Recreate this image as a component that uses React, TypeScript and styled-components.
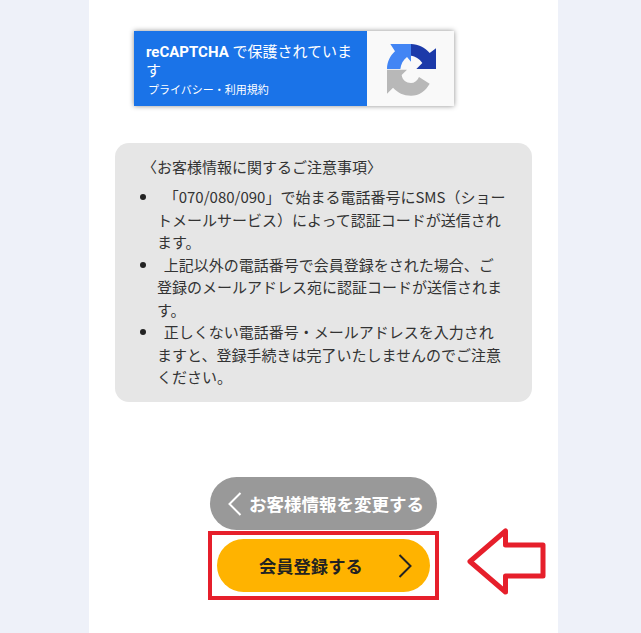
import styled, { createGlobalStyle } from "styled-components";

const GlobalStyle = createGlobalStyle`
  html, body {
    margin: 0;
    padding: 0;
    height: 100%;
    overflow: hidden;
    background: #eef1f9;
    font-family: "Noto Sans CJK JP", "Noto Sans", sans-serif;
    color: #333;
  }
`;

const Page = styled.div`
  width: 641px;
  height: 633px;
  overflow: hidden;
  display: flex;
  justify-content: flex-start;
`;

const Column = styled.main`
  box-sizing: border-box;
  width: 469px;
  height: 633px;
  margin-left: 89px;
  background: #fff;
  padding: 31px 26px 0;
  display: flex;
  flex-direction: column;
`;

const Badge = styled.div`
  width: 320px;
  height: 75px;
  margin-left: 19px;
  display: flex;
  box-shadow: 0 0 5px rgba(0, 0, 0, 0.45);
`;

const BadgeText = styled.div`
  box-sizing: border-box;
  width: 233px;
  padding: 12px 8px 0 12px;
  background: #1a73e8;
  color: #fff;
`;

const BadgeTitle = styled.div`
  font-family: Roboto, "Noto Sans CJK JP", sans-serif;
  font-size: 15px;
  line-height: 19px;

  b {
    font-weight: 700;
  }
`;

const BadgeLinks = styled.div`
  font-family: Roboto, "Noto Sans CJK JP", sans-serif;
  font-size: 11px;
  line-height: 16px;
  margin: 2px 0 0 2px;
`;

const BadgeLogo = styled.div`
  flex: 1;
  background: #f9f9f9;
  display: flex;
  align-items: center;
  justify-content: center;
`;

const Notes = styled.section`
  box-sizing: border-box;
  width: 417px;
  height: 259px;
  margin-top: 37px;
  padding: 13px 26px 12px 0;
  background: #e6e6e6;
  border-radius: 14px;
  font-size: 15px;
  line-height: 22.5px;
`;

const NotesTitle = styled.div`
  padding-left: 27px;
  margin-bottom: 7.5px;
`;

const NotesList = styled.ul`
  margin: 0;
  padding: 0 0 0 42px;
  list-style: none;
`;

const NotesItem = styled.li`
  position: relative;

  &::before {
    content: "";
    position: absolute;
    left: -17px;
    top: 8px;
    width: 6px;
    height: 6px;
    border-radius: 50%;
    background: #222;
  }
`;

const Actions = styled.div`
  margin-top: 75px;
  display: flex;
  flex-direction: column;
  align-items: center;
  position: relative;
  width: 417px;
`;

const PillButton = styled.button<{ $variant: "back" | "next" }>`
  box-sizing: border-box;
  height: 53px;
  border: 0;
  border-radius: 27px;
  display: flex;
  align-items: center;
  font-family: inherit;
  font-weight: 700;
  padding: 0;
  font-size: ${(p) => (p.$variant === "back" ? "17.5px" : "17.3px")};
  background: ${(p) => (p.$variant === "back" ? "#999" : "#ffb300")};
  color: ${(p) => (p.$variant === "back" ? "#fff" : "#222")};
  width: ${(p) => (p.$variant === "back" ? "227px" : "213px")};
  padding-left: ${(p) => (p.$variant === "back" ? "18px" : "42px")};
  gap: ${(p) => (p.$variant === "back" ? "7px" : "35px")};
`;

const Highlight = styled.div`
  box-sizing: border-box;
  width: 231px;
  height: 69px;
  margin-top: 1px;
  border: 4px solid #e61f2b;
  display: flex;
  align-items: center;
  justify-content: center;
`;

const PointerArrow = styled.svg`
  position: absolute;
  left: 351px;
  top: 49px;
`;

function Chevron({ left, color }: { left?: boolean; color: string }) {
  return (
    <svg width="14" height="24" viewBox="0 0 14 24" fill="none">
      <path
        d={left ? "M12.5 1 L1.5 12 L12.5 23" : "M1.5 1 L12.5 12 L1.5 23"}
        stroke={color}
        strokeWidth="2"
      />
    </svg>
  );
}

function RecaptchaLogo() {
  return (
    <svg width="60" height="60" viewBox="0 0 180 180">
      <path
        d="M18 90 C18 68 28 50 42 37 L28 15 L90 15 L90 68 L78 54 C66 63 60 76 58 90 Z"
        fill="#4285f4"
      />
      <path
        d="M90 15 C112 15 132 26 146 42 L165 28 L165 90 L106 90 L124 72 C115 58 103 52 90 50 Z"
        fill="#1c3aa9"
      />
      <path
        d="M18 92 L78 92 L62 108 C64 124 76 132 90 132 C100 132 108 126 114 114 L146 134 C134 156 114 170 90 170 C68 170 50 161 36 146 L18 164 Z"
        fill="#b8b8b8"
      />
    </svg>
  );
}

export default function App() {
  return (
    <Page>
      <GlobalStyle />
      <Column>
        <Badge>
          <BadgeText>
            <BadgeTitle>
              <b>reCAPTCHA</b> で保護されています
            </BadgeTitle>
            <BadgeLinks>プライバシー・利用規約</BadgeLinks>
          </BadgeText>
          <BadgeLogo>
            <RecaptchaLogo />
          </BadgeLogo>
        </Badge>
        <Notes>
          <NotesTitle>〈お客様情報に関するご注意事項〉</NotesTitle>
          <NotesList>
            <NotesItem>&nbsp;&nbsp;「070/080/090」で始まる電話番号にSMS（ショートメールサービス）によって認証コードが送信されます。</NotesItem>
            <NotesItem>&nbsp; 上記以外の電話番号で会員登録をされた場合、ご登録のメールアドレス宛に認証コードが送信されます。</NotesItem>
            <NotesItem>&nbsp; 正しくない電話番号・メールアドレスを入力されますと、登録手続きは完了いたしませんのでご注意ください。</NotesItem>
          </NotesList>
        </Notes>
        <Actions>
          <PillButton $variant="back">
            <Chevron left color="#fff" />
            お客様情報を変更する
          </PillButton>
          <Highlight>
            <PillButton $variant="next">
              会員登録する
              <Chevron color="#222" />
            </PillButton>
          </Highlight>
          <PointerArrow width="84" height="72" viewBox="0 0 84 72" fill="none">
            <path
              d="M4 35.5 L39.5 5 L39.5 19 L77 19 L77 50 L39.5 50 L39.5 66 Z"
              stroke="#e61f2b"
              strokeWidth="5"
              strokeLinejoin="round"
            />
          </PointerArrow>
        </Actions>
      </Column>
    </Page>
  );
}
